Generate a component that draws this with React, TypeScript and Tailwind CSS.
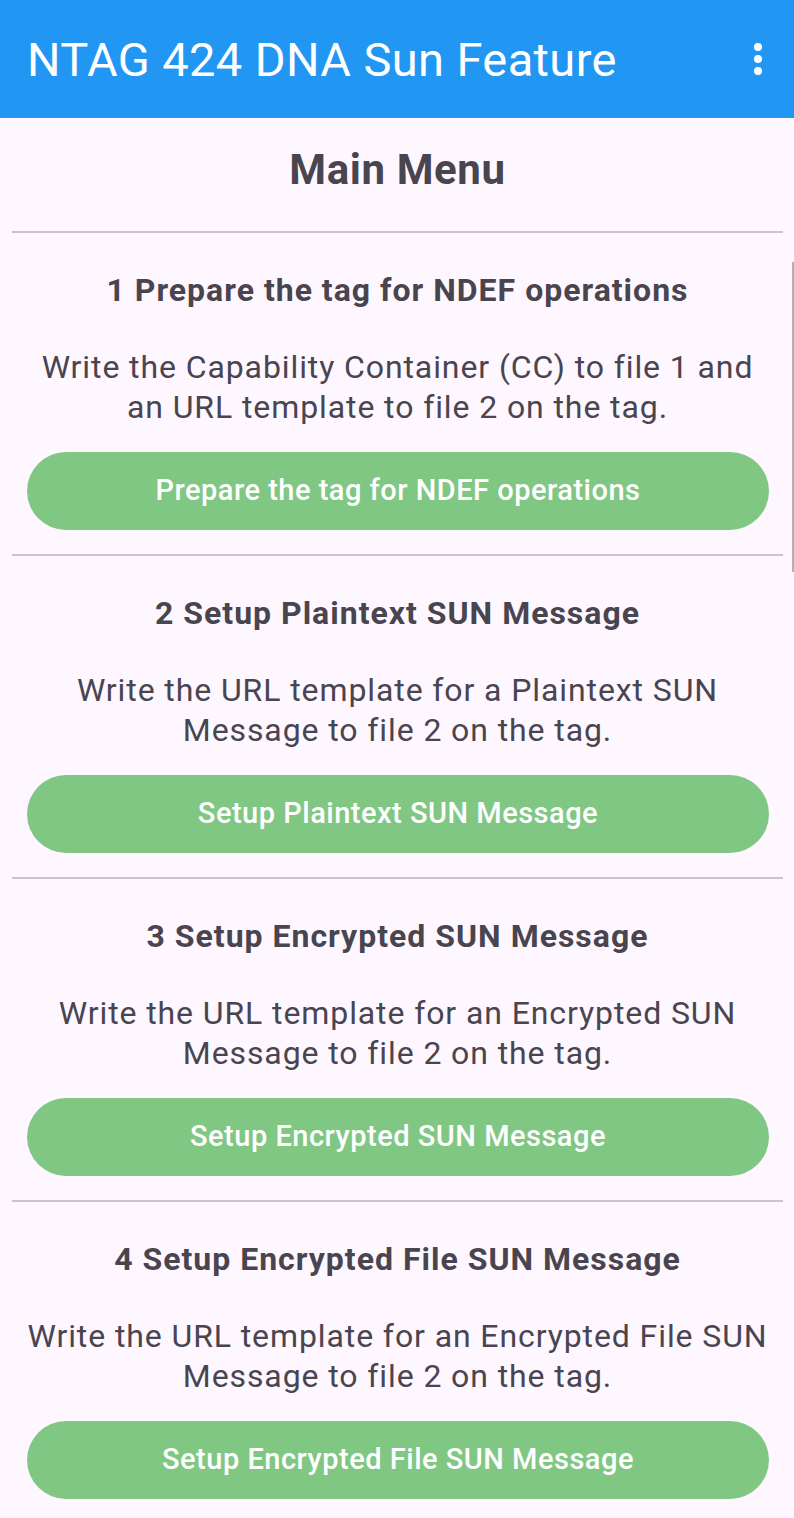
import React from "react";

const sections = [
  {
    title: "1 Prepare the tag for NDEF operations",
    lines: ["Write the Capability Container (CC) to file 1 and", "an URL template to file 2 on the tag."],
    button: "Prepare the tag for NDEF operations",
  },
  {
    title: "2 Setup Plaintext SUN Message",
    lines: ["Write the URL template for a Plaintext SUN", "Message to file 2 on the tag."],
    button: "Setup Plaintext SUN Message",
  },
  {
    title: "3 Setup Encrypted SUN Message",
    lines: ["Write the URL template for an Encrypted SUN", "Message to file 2 on the tag."],
    button: "Setup Encrypted SUN Message",
  },
  {
    title: "4 Setup Encrypted File SUN Message",
    lines: ["Write the URL template for an Encrypted File SUN", "Message to file 2 on the tag."],
    button: "Setup Encrypted File SUN Message",
  },
];

export default function App() {
  return (
    <div
      className="relative w-[794px] h-[1518px] overflow-hidden bg-[#FEF7FF]"
      style={{ fontFamily: "Roboto, 'Noto Sans', sans-serif" }}
    >
      <header className="h-[118px] bg-[#2196F3] flex items-center justify-between pl-[27px] pr-[32px]">
        <h1 className="text-white text-[47px] leading-none font-normal tracking-[0.4px]">NTAG 424 DNA Sun Feature</h1>
        <div className="flex flex-col items-center gap-[4px]">
          <span className="block w-[8px] h-[8px] rounded-full bg-white" />
          <span className="block w-[8px] h-[8px] rounded-full bg-white" />
          <span className="block w-[8px] h-[8px] rounded-full bg-white" />
        </div>
      </header>

      <main className="pl-[12px] pr-[11px] text-[#49454F]">
        <div className="pt-[27px] pb-[36px] text-center text-[42px] leading-[50px] font-bold tracking-[0.6px]">Main Menu</div>
        {sections.map((s) => (
          <section key={s.title}>
            <div className="h-[2px] bg-[#CAC4D0]" />
            <h2 className="pt-[37px] text-center text-[32px] leading-[40px] font-bold tracking-[1px]">{s.title}</h2>
            <p className="pt-[37px] text-center text-[32px] leading-[40px] font-normal tracking-[0.9px]">
              {s.lines[0]}
              <br />
              {s.lines[1]}
            </p>
            <div className="pt-[25px] pb-[24px] pl-[15px] pr-[14px]">
              <button className="w-full h-[78px] rounded-full bg-[#81C784] text-white text-[29px] font-medium tracking-[0.5px] flex items-center justify-center">
                {s.button}
              </button>
            </div>
          </section>
        ))}
      </main>

      <div className="absolute right-0 top-[262px] w-[2px] h-[310px] bg-[#B5B0B5]" />
    </div>
  );
}
